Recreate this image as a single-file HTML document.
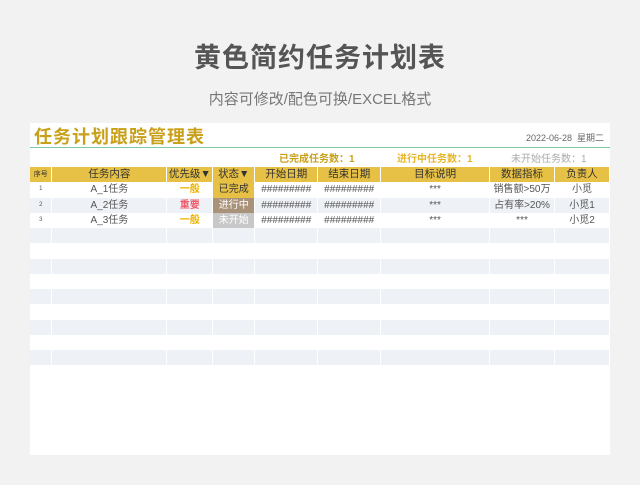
<!DOCTYPE html><html><head><meta charset="utf-8"><style>
body{margin:0;width:640px;height:485px;background:#f2f2f2;font-family:"Liberation Sans","Noto Sans CJK SC",sans-serif;position:relative;overflow:hidden}
.h1{position:absolute;top:36px;left:0;width:640px;text-align:center;font-size:27px;color:#555;font-weight:bold;letter-spacing:1px}
.h2{position:absolute;top:88px;left:0;width:640px;text-align:center;font-size:15px;color:#777}
.card{position:absolute;left:30px;top:123px;width:580px;height:332px;background:#fff}
.t{position:absolute;left:4px;top:0;font-size:18px;font-weight:bold;color:#c9a019;letter-spacing:1px}
.d{position:absolute;right:6px;top:8px;font-size:9px;color:#666}
.ln{position:absolute;left:0;top:24px;width:580px;height:1px;background:#7fc8a6}
.s{position:absolute;top:27px;font-size:10px;font-weight:bold}
table{position:absolute;left:0;top:44px;border-collapse:collapse;table-layout:fixed;font-size:10px;color:#555}
tr{height:15.25px}
td{height:15.25px;padding:0;text-align:center;border-right:1px solid #fff;white-space:nowrap;overflow:hidden;line-height:15px;box-sizing:border-box}
tr.hd td{background:#e7c146;color:#333;font-size:10.5px}
tr:nth-child(odd):not(.hd) td{background:#eef1f6}
tr.w td{background:#fff}
.a{background:#e7c146!important;color:#333}.b{background:#a8927a!important;color:#fff}.c{background:#c8c8c8!important;color:#fff}
</style></head><body>
<div class="h1">黄色简约任务计划表</div>
<div class="h2">内容可修改/配色可换/EXCEL格式</div>
<div class="card">
<div class="t">任务计划跟踪管理表</div>
<div class="d">2022-06-28&nbsp; 星期二</div>
<div class="ln"></div>
<div class="s" style="left:249px;color:#c9a019">已完成任务数：1</div>
<div class="s" style="left:367px;color:#e8b528">进行中任务数：1</div>
<div class="s" style="left:481px;color:#aaa;font-weight:normal">未开始任务数：1</div>
<table>
<colgroup><col style="width:22px"><col style="width:115px"><col style="width:46px"><col style="width:42px"><col style="width:63px"><col style="width:63px"><col style="width:109px"><col style="width:65px"><col style="width:55px"></colgroup>
<tr class="hd"><td style="font-size:7px">序号</td><td>任务内容</td><td>优先级▼</td><td>状态▼</td><td>开始日期</td><td>结束日期</td><td>目标说明</td><td>数据指标</td><td>负责人</td></tr>
<tr class="w"><td style="font-size:6px">1</td><td>A_1任务</td><td style="color:#f0b400;font-weight:bold">一般</td><td class="a">已完成</td><td>#########</td><td>#########</td><td>***</td><td>销售额&gt;50万</td><td>小觅</td></tr>
<tr><td style="font-size:6px">2</td><td>A_2任务</td><td style="color:#f05a6a;font-weight:bold">重要</td><td class="b">进行中</td><td>#########</td><td>#########</td><td>***</td><td>占有率&gt;20%</td><td>小觅1</td></tr>
<tr class="w"><td style="font-size:6px">3</td><td>A_3任务</td><td style="color:#f0b400;font-weight:bold">一般</td><td class="c">未开始</td><td>#########</td><td>#########</td><td>***</td><td>***</td><td>小觅2</td></tr>
<tr><td></td><td></td><td></td><td></td><td></td><td></td><td></td><td></td><td></td></tr>
<tr class="w"><td></td><td></td><td></td><td></td><td></td><td></td><td></td><td></td><td></td></tr>
<tr><td></td><td></td><td></td><td></td><td></td><td></td><td></td><td></td><td></td></tr>
<tr class="w"><td></td><td></td><td></td><td></td><td></td><td></td><td></td><td></td><td></td></tr>
<tr><td></td><td></td><td></td><td></td><td></td><td></td><td></td><td></td><td></td></tr>
<tr class="w"><td></td><td></td><td></td><td></td><td></td><td></td><td></td><td></td><td></td></tr>
<tr><td></td><td></td><td></td><td></td><td></td><td></td><td></td><td></td><td></td></tr>
<tr class="w"><td></td><td></td><td></td><td></td><td></td><td></td><td></td><td></td><td></td></tr>
<tr><td></td><td></td><td></td><td></td><td></td><td></td><td></td><td></td><td></td></tr>
</table>
</div>
</body></html>
